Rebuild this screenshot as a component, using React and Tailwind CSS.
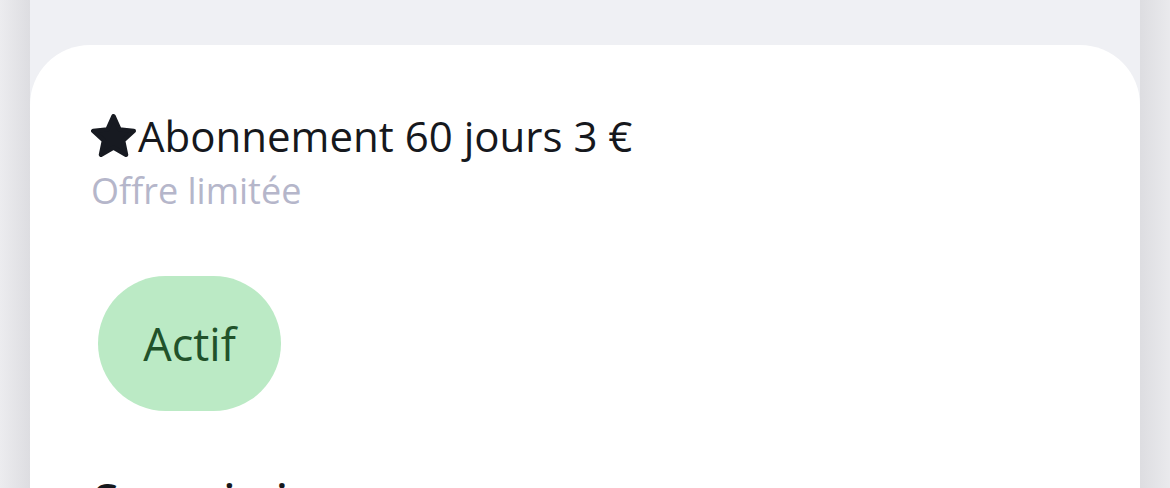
import React from "react";

function Star() {
  return (
    <svg
      width="45"
      height="43"
      viewBox="1.965 2.4 20.07 19.19"
      className="shrink-0"
    >
      <polygon
        points="12,3.4 14.645,9.26 21.035,9.964 16.28,14.29 17.584,20.586 12,17.4 6.416,20.586 7.72,14.29 2.965,9.964 9.355,9.26"
        fill="#171a21"
        stroke="#171a21"
        strokeWidth="2"
        strokeLinejoin="round"
      />
    </svg>
  );
}

export default function App() {
  return (
    <div
      className="flex h-[488px] w-[1170px] overflow-hidden"
      style={{ fontFamily: '"Open Sans", "Noto Sans", sans-serif' }}
    >
      <div className="w-[30px] shrink-0 bg-gradient-to-r from-[#ececef] to-[#dddde1]" />
      <div className="flex-1 bg-[#eff0f4] pt-[45px]">
        <div className="h-full rounded-t-[60px] bg-white pl-[61px] pt-[62px]">
          <div className="flex items-center gap-[2px] h-[57px] text-[42px] leading-[57px] text-[#16181d]">
            <Star />
            <span>Abonnement 60 jours 3 €</span>
          </div>
          <div className="mt-[3px] text-[36px] leading-[48px] text-[#b5b6ca]">
            Offre limitée
          </div>
          <div className="mt-[61px] ml-[7px] flex h-[135px] w-[183px] items-center justify-center rounded-full bg-[#bbeac5] text-[45px] leading-[57px] text-[#21522a]">
            Actif
          </div>
          <div className="mt-[58px] text-[42px] font-semibold leading-[57px] text-[#16181d]">
            Commission
          </div>
        </div>
      </div>
      <div className="w-[30px] shrink-0 bg-gradient-to-r from-[#dddde1] to-[#eaeaed]" />
    </div>
  );
}
